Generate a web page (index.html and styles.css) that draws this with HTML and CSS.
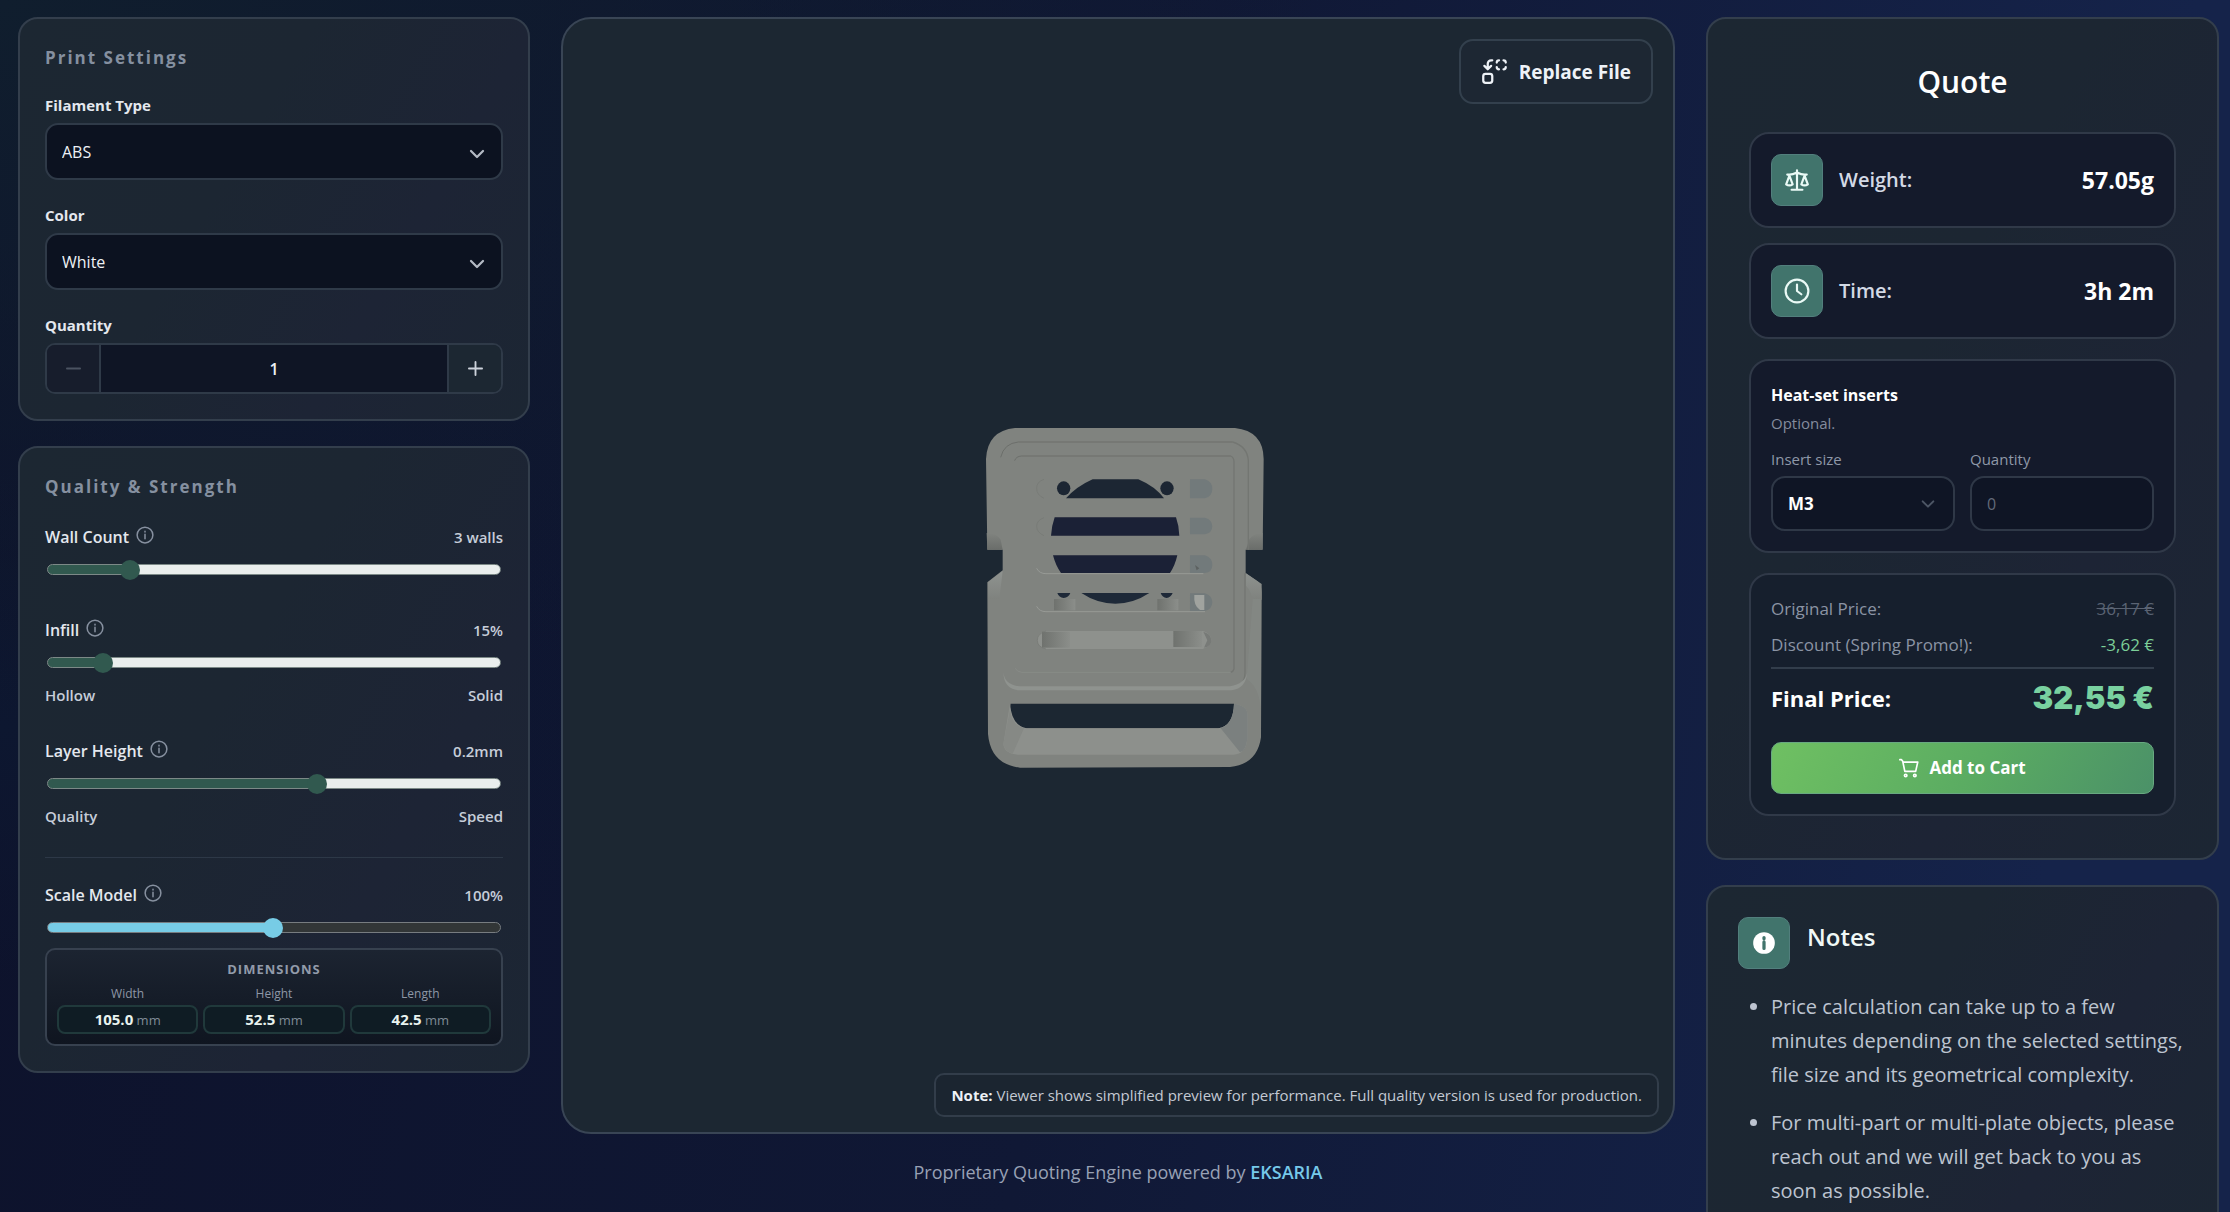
FILE: index.html
```html
<!DOCTYPE html>
<html lang="en">
<head>
<meta charset="utf-8">
<meta name="viewport" content="width=device-width, initial-scale=1">
<title>Instant Quote</title>
<link rel="stylesheet" href="styles.css">
</head>
<body>
<svg class="sprite" aria-hidden="true">
  <symbol id="i-info" viewBox="0 0 24 24"><circle cx="12" cy="12" r="10.5"/><path d="M12 11v6M12 7v1"/></symbol>
  <symbol id="i-chevron" viewBox="0 0 24 24"><path d="m4 8 8 8 8-8"/></symbol>
</svg>
<div class="app">
  <aside class="column">
    <section class="card settings">
      <h2 class="section-title">Print Settings</h2>
      <div class="field">
        <label class="label" for="filament">Filament Type</label>
        <div class="select">
          <select id="filament"><option>ABS</option></select>
          <svg class="chevron"><use href="#i-chevron"/></svg>
        </div>
      </div>
      <div class="field">
        <label class="label" for="color">Color</label>
        <div class="select">
          <select id="color"><option>White</option></select>
          <svg class="chevron"><use href="#i-chevron"/></svg>
        </div>
      </div>
      <div class="field">
        <label class="label" for="qty">Quantity</label>
        <div class="stepper">
          <button type="button" aria-label="Decrease" disabled><svg viewBox="0 0 16 16"><path d="M1 8h14"/></svg></button>
          <input id="qty" type="text" inputmode="numeric" value="1">
          <button type="button" aria-label="Increase"><svg viewBox="0 0 16 16"><path d="M1 8h14M8 1v14"/></svg></button>
        </div>
      </div>
    </section>

    <section class="card settings">
      <h2 class="section-title">Quality &amp; Strength</h2>
      <div class="slider slider-first">
        <div class="row"><label class="label" for="walls">Wall Count</label><svg class="info"><use href="#i-info"/></svg><output class="value" for="walls">3 walls</output></div>
        <input id="walls" class="range" type="range" min="1" max="13" value="3" style="--fill:16.7%">
      </div>
      <div class="slider slider-second">
        <div class="row"><label class="label" for="infill">Infill</label><svg class="info"><use href="#i-info"/></svg><output class="value" for="infill">15%</output></div>
        <input id="infill" class="range" type="range" min="5" max="100" value="15" style="--fill:10.5%">
        <div class="row ends"><span>Hollow</span><span>Solid</span></div>
      </div>
      <div class="slider slider-third">
        <div class="row"><label class="label" for="layer">Layer Height</label><svg class="info"><use href="#i-info"/></svg><output class="value" for="layer">0.2mm</output></div>
        <input id="layer" class="range" type="range" min="0.08" max="0.28" step="0.04" value="0.2" style="--fill:60%">
        <div class="row ends"><span>Quality</span><span>Speed</span></div>
      </div>
      <div class="scale">
        <div class="row"><label class="label" for="scale">Scale Model</label><svg class="info"><use href="#i-info"/></svg><output class="value" for="scale">100%</output></div>
        <input id="scale" class="range range-sky" type="range" min="1" max="200" value="100" style="--fill:49.7%">
        <div class="dimensions">
          <h3>DIMENSIONS</h3>
          <dl>
            <div><dt>Width</dt><dd><b>105.0</b> mm</dd></div>
            <div><dt>Height</dt><dd><b>52.5</b> mm</dd></div>
            <div><dt>Length</dt><dd><b>42.5</b> mm</dd></div>
          </dl>
        </div>
      </div>
    </section>
  </aside>

  <main class="center">
    <section class="viewer" aria-label="Model preview">
      <svg class="model" viewBox="0 0 1110 1113" role="img" aria-label="3D model">
        <defs>
          <linearGradient id="lip" x1="0" y1="0" x2="0" y2="1"><stop offset="0" stop-color="#80837f"/><stop offset="1" stop-color="#6a6d6a"/></linearGradient>
          <linearGradient id="peg" x1="0" y1="0" x2="1" y2="0"><stop offset="0" stop-color="#6f726e"/><stop offset="1" stop-color="#8b8e8a"/></linearGradient>
          <linearGradient id="shoulder" x1="0" y1="0" x2="0" y2="1"><stop offset="0" stop-color="#8f9390"/><stop offset="1" stop-color="#7f827e"/></linearGradient>
        </defs>
        <g transform="translate(397 390) scale(.33333)">
          <path fill="#80837f" fill-rule="evenodd" d="M165 57H825Q910 66 911 150L908 422H857V493L886 512Q905 522 905 550L903 985Q892 1066 810 1074L180 1076Q92 1066 84 975L82 520L128 484V422H82L78 150Q82 65 165 57ZM152 884H822V900Q820 950 775 958H200Q155 950 150 895Z"/>
          <path fill="url(#lip)" d="M80 372Q112 374 122 392L128 422H82ZM908 372Q880 374 868 390L858 422H907Z"/>
          <path fill="url(#shoulder)" d="M128 486 84 520V570H118ZM858 493 905 525V572H878Q873 545 858 530Z"/>
          <path fill="#868b88" d="M878 570H904L903 900Q895 830 860 810Z" opacity=".5"/>
          <path fill="none" stroke="#6b6e6a" stroke-width="3" d="M122 145Q132 103 175 99H818M164 155Q168 142 185 141H812"/>
          <path fill="none" stroke="#737672" stroke-width="4" d="M818 99Q862 112 865 155V422M855 493V790Q855 815 843 825M812 141Q822 146 822 158V780Q820 788 812 790"/>
          <path fill="none" stroke="#8b8f8b" stroke-width="2" d="M812 790H185Q170 788 166 778"/>
          <path fill="#8f938f" d="M130 790Q134 828 178 832H810Q855 825 862 790 858 838 815 844H178Q132 842 130 790Z"/>
          <path fill="#8d908c" d="M150 884Q155 950 200 958H775Q820 950 822 884 862 890 862 915V990Q858 1035 820 1037H175Q133 1035 130 1005Z"/>
          <path fill="#7b807f" d="M822 884Q862 890 862 915V990Q858 1025 840 1030L782 958Q820 945 822 884Z"/>
          <path fill="#868985" d="M130 1005 150 900Q155 950 192 958L158 1034Q134 1028 130 1005Z"/>
          <g fill="#1c2633">
            <ellipse cx="311" cy="238" rx="20" ry="21"/><ellipse cx="621" cy="238" rx="20" ry="21"/>
            <path d="M398 211H535Q585 232 612 268H318Q350 232 398 211Z"/>
          </g>
          <g fill="#1b2136">
            <path d="M284 325H648Q657 350 658 380H273Q275 350 284 325ZM279 439H652Q645 470 630 492H303Q287 470 279 439Z"/>
          </g>
          <path fill="#1e2938" d="M364 552H568Q520 584 466 584T364 552ZM292 552H331Q326 566 311 567 297 566 292 552ZM602 552H638Q632 566 620 567 607 566 602 552Z"/>
          <g fill="#727a7b">
            <path d="M690 211H735Q757 218 757 240T735 268H690ZM690 326H735Q757 332 757 352T735 376H690ZM690 439H735Q757 446 757 468T735 492H690ZM690 553H735Q757 560 757 580T735 606H690Z"/>
          </g>
          <path fill="#a0a39f" d="M703 558H733V603H720Q700 590 703 558Z"/>
          <path fill="#5d6261" d="m705 468 13 10-8 6Z"/>
          <path fill="url(#peg)" d="M282 570H346V604H282Z"/>
          <path fill="url(#peg)" d="M592 570H655V604H592Z"/>
          <path fill="#8e918d" d="M255 666H730Q754 675 754 693T728 720H258Q232 714 232 694T255 666Z"/>
          <path fill="url(#peg)" d="M246 668H330V716H246Z"/>
          <path fill="url(#peg)" d="M640 666H726V714H640Z"/>
          <path fill="#777a77" d="M730 668Q754 675 754 694T732 716L742 694Z"/>
          <path fill="none" stroke="#979a96" stroke-width="3" d="M230 478Q238 494 258 494H730M230 592Q238 608 258 608H735"/>
          <path fill="none" stroke="#747773" stroke-width="2" d="M252 211Q230 218 230 238T252 268M252 326Q230 334 230 352T252 380M258 666Q232 674 232 694T258 720"/>
        </g>
      </svg>
      <button type="button" class="replace">
        <svg viewBox="0 0 24 24"><path d="M14 4a2 2 0 0 1 2-2M16 10a2 2 0 0 1-2-2M20 2a2 2 0 0 1 2 2M22 8a2 2 0 0 1-2 2M3 7l3 3 3-3M6 10V5a3 3 0 0 1 3-3h1"/><rect x="2" y="14" width="8" height="8" rx="2"/></svg>
        Replace File
      </button>
      <p class="viewer-note"><strong>Note:</strong> Viewer shows simplified preview for performance. Full quality version is used for production.</p>
    </section>
    <p class="powered">Proprietary Quoting Engine powered by <a href="#">EKSARIA</a></p>
  </main>

  <aside class="column">
    <section class="card quote">
      <h2 class="quote-title">Quote</h2>
      <div class="panel stat">
        <span class="tile"><svg viewBox="0 0 24 24"><path d="m16 16 3-8 3 8c-.87.65-1.92 1-3 1s-2.13-.35-3-1ZM2 16l3-8 3 8c-.87.65-1.92 1-3 1s-2.13-.35-3-1ZM7 21h10M12 3v18M3 7h2c2 0 5-1 7-2 2 1 5 2 7 2h2"/></svg></span>
        <span class="stat-name">Weight:</span>
        <span class="stat-value">57.05g</span>
      </div>
      <div class="panel stat">
        <span class="tile"><svg viewBox="0 0 24 24"><circle cx="12" cy="12" r="10.500"/><path d="M12 6v6l4 3"/></svg></span>
        <span class="stat-name">Time:</span>
        <span class="stat-value">3h 2m</span>
      </div>
      <div class="panel inserts">
        <h3>Heat-set inserts</h3>
        <p class="optional">Optional.</p>
        <div class="insert-fields">
          <div>
            <label for="insert-size">Insert size</label>
            <div class="select select-small">
              <select id="insert-size"><option>M3</option></select>
              <svg class="chevron"><use href="#i-chevron"/></svg>
            </div>
          </div>
          <div>
            <label for="insert-qty">Quantity</label>
            <input id="insert-qty" class="insert-qty" type="text" inputmode="numeric" placeholder="0">
          </div>
        </div>
      </div>
      <div class="panel price">
        <div class="row price-row"><span>Original Price:</span><s>36,17 €</s></div>
        <div class="row price-row"><span>Discount (Spring Promo!):</span><span class="discount">-3,62 €</span></div>
        <div class="row final"><span>Final Price:</span><strong>32,55 €</strong></div>
        <button type="button" class="cart">
          <svg viewBox="0 0 24 24"><path d="M1 2h2l1.500 2L7 16h13l2.500-11H5"/><circle cx="8" cy="21" r="1.500"/><circle cx="19" cy="21" r="1.500"/></svg>
          Add to Cart
        </button>
      </div>
    </section>

    <section class="card notes">
      <header>
        <span class="tile"><svg class="solid" viewBox="0 0 24 24"><circle cx="12" cy="12" r="10"/><path d="M12 11v6M12 7v1"/></svg></span>
        <h2>Notes</h2>
      </header>
      <ul>
        <li>Price calculation can take up to a few minutes depending on the selected settings, file size and its geometrical complexity.</li>
        <li>For multi-part or multi-plate objects, please reach out and we will get back to you as soon as possible.</li>
      </ul>
    </section>
  </aside>
</div>
</body>
</html>
```
FILE: styles.css
```css
* { box-sizing: border-box; }

body {
  margin: 0;
  color: #d5dae3;
  font-family: "Open Sans", "Noto Sans", sans-serif;
  font-size: 16px;
  line-height: 24px;
  background:
    radial-gradient(ellipse at 0 0, #101e2e 0, transparent 42%),
    radial-gradient(ellipse at 0 60%, #0d1730 0, transparent 25%),
    linear-gradient(100deg, #0d122b 0, #101835 50%, #15234a 90%);
}

h2, h3, p, ul, dl, dd { margin: 0; }
button, input, select { font: inherit; color: inherit; }
svg { fill: none; stroke: currentColor; stroke-width: 2; stroke-linecap: round; stroke-linejoin: round; }
.sprite { display: none; }

.app {
  display: grid;
  grid-template-columns: 512px minmax(0, 1fr) 513px;
  align-items: start;
  gap: 31px;
  height: 100vh;
  padding: 17px 11px 17px 18px;
  overflow: auto;
  scrollbar-width: none;
}

.column { display: flex; flex-direction: column; gap: 25px; }

.card {
  border: 2px solid #333e4c;
  border-radius: 20px;
  background: linear-gradient(120deg, #1c2732 0, #1c2632 40%, #1d2435 70%, #1c2633 100%);
}

.settings { padding: 27px 25px 25px; }

.section-title {
  margin-bottom: 23px;
  color: #8590a0;
  font-size: 17px;
  font-weight: 700;
  letter-spacing: 2px;
}

.field + .field { margin-top: 23px; }
.label { color: #e4e8ee; font-size: 16px; font-weight: 600; }
.field .label { display: block; margin-bottom: 6px; font-size: 15px; font-weight: 700; }

.select { display: grid; align-items: center; }
.select > * { grid-area: 1 / 1; }
.select select {
  width: 100%;
  height: 57px;
  padding: 0 15px;
  border: 2px solid #2f3a48;
  border-radius: 13px;
  background: #0c1220;
  color: #eef1f5;
  appearance: none;
}
.chevron {
  justify-self: end;
  width: 18px;
  height: 18px;
  margin: 4px 17px 0 0;
  color: #b4bac4;
  stroke-width: 3;
  pointer-events: none;
}

.stepper {
  display: grid;
  grid-template-columns: 52px 1fr 52px;
  height: 51px;
  overflow: hidden;
  border: 2px solid #2f3a48;
  border-radius: 10px;
}
.stepper button { display: grid; place-items: center; padding: 0; border: 0; background: #1c2732; color: #ccd2db; }
.stepper button:disabled { background: #171d2c; color: #4b5361; }
.stepper svg { width: 15px; height: 15px; }
.stepper input {
  min-width: 0;
  padding: 0;
  border: solid #2f3a48;
  border-width: 0 2px;
  background: #0f1525;
  color: #eef1f5;
  font-weight: 600;
  text-align: center;
}

.row { display: flex; align-items: center; }
.row > :last-child { margin-left: auto; }
.info { width: 18px; height: 18px; margin: -4px 0 0 7px; color: #8791a0; }
.value, .ends { color: #c6cdd9; font-size: 15px; font-weight: 600; }
.ends { margin-top: 11px; }
.slider-first { margin-top: 26px; }
.slider-second { margin-top: 39px; }
.slider-third { margin-top: 32px; }

.range {
  display: block;
  width: calc(100% - 4px);
  height: 20px;
  margin: 10px 2px 0;
  background: none;
  appearance: none;
  --on: #31594f;
  --off: #eaeeed;
  --line: #7c8987;
}
.range-sky { --on: #77cce6; --off: #323637; --line: #777c80; }
.range::-webkit-slider-runnable-track {
  height: 11px;
  border: 1px solid var(--line);
  border-radius: 6px;
  background: linear-gradient(90deg, var(--on) var(--fill), var(--off) var(--fill));
}
.range::-webkit-slider-thumb {
  width: 20px;
  height: 20px;
  margin-top: -5px;
  border-radius: 50%;
  background: var(--on);
  appearance: none;
}

.scale { margin-top: 29px; padding-top: 25px; border-top: 1px solid #2d3847; }

.dimensions {
  margin-top: 11px;
  padding: 9px 10px 10px;
  border: 2px solid #37414f;
  border-radius: 10px;
  background: linear-gradient(#1c2431, #0f1520);
  text-align: center;
}
.dimensions h3 { color: #929baa; font-size: 13px; font-weight: 700; line-height: 20px; letter-spacing: 1px; }
.dimensions dl { display: grid; grid-template-columns: repeat(3, 1fr); gap: 5px; margin-top: 6px; }
.dimensions dt { color: #8e97a6; font-size: 12px; line-height: 18px; }
.dimensions dd { margin-top: 2px; border: 2px solid #20393b; border-radius: 8px; background: #0f1c24; color: #7f8b96; font-size: 13px; line-height: 24px; }
.dimensions b { color: #e9f3ef; font-size: 15px; }

.viewer {
  position: relative;
  aspect-ratio: 1114 / 1117;
  border: 2px solid #394555;
  border-radius: 30px;
  background: #1c2732;
}
.model { display: block; width: 100%; height: 100%; stroke: none; stroke-linecap: butt; }
.replace {
  position: absolute;
  top: 20px;
  right: 20px;
  display: flex;
  align-items: center;
  gap: 11px;
  height: 65px;
  padding: 0 20px;
  border: 2px solid #33404d;
  border-radius: 14px;
  background: #1d2733;
  color: #eef2f7;
  font-size: 19px;
  font-weight: 700;
}
.replace svg { width: 27px; height: 27px; }
.viewer-note {
  position: absolute;
  right: 14px;
  bottom: 15px;
  padding: 8px 15px;
  border: 2px solid #323d4a;
  border-radius: 10px;
  background: #1b2530;
  color: #c3c9d3;
  font-size: 15px;
}
.viewer-note strong { color: #eef2f7; }
.powered { margin-top: 26px; color: #98a1b5; font-size: 18px; text-align: center; }
.powered a { color: #76c9ea; font-weight: 600; text-decoration: none; }

.quote { padding: 42px 41px; }
.quote-title { margin-bottom: 29px; color: #fff; font-size: 30px; font-weight: 600; line-height: 42px; text-align: center; }
.panel { border: 2px solid #303948; border-radius: 20px; background: #141a2b; }
.stat { display: flex; align-items: center; height: 96px; margin-bottom: 15px; padding: 0 20px; }
.tile {
  display: grid;
  place-items: center;
  width: 52px;
  height: 52px;
  border: 1px solid #527f7d;
  border-radius: 10px;
  background: #41746c;
  color: #eafaf6;
}
.tile svg { width: 26px; height: 26px; }
.tile .solid { fill: #fff; stroke: none; }
.tile .solid path { stroke: #41746c; stroke-width: 3; }
.stat-name { margin-left: 16px; color: #d3d9e5; font-size: 20px; font-weight: 600; }
.stat-value { margin-left: auto; color: #fff; font-size: 23px; font-weight: 700; }

.inserts { margin-top: 20px; padding: 22px 20px 20px; }
.inserts h3 { color: #fff; font-size: 16px; font-weight: 700; line-height: 24px; }
.optional { margin-top: 4px; color: #848c9d; font-size: 15px; }
.insert-fields { display: grid; grid-template-columns: 1fr 1fr; gap: 15px; margin-top: 12px; }
.insert-fields label { display: block; margin-bottom: 5px; color: #8f98a8; font-size: 15px; font-weight: 500; }
.select-small select, .insert-qty {
  width: 100%;
  height: 55px;
  padding: 0 15px;
  border: 2px solid #2f3847;
  border-radius: 14px;
  background: #0f1525;
}
.select-small select { color: #fff; font-size: 17px; font-weight: 700; }
.select-small .chevron { width: 16px; height: 16px; margin: 0 19px 0 0; color: #4d5665; }
.insert-qty::placeholder { color: #626a79; opacity: 1; }

.price { margin-top: 20px; padding: 22px 20px 20px; background: #161f2d; }
.price-row { height: 24px; margin-bottom: 12px; color: #8b94a4; font-size: 17px; }
.price-row s { color: #5a6373; }
.discount { color: #7ccf98; }
.final { height: 60px; margin-top: -2px; border-top: 2px solid #323d4b; color: #fff; font-size: 22px; font-weight: 700; }
.final strong { color: #79d1a0; font-family: Inter, "Liberation Sans", sans-serif; font-size: 31px; }
.cart {
  display: flex;
  align-items: center;
  justify-content: center;
  gap: 10px;
  width: 100%;
  height: 52px;
  margin-top: 15px;
  border: 1px solid #68a981;
  border-radius: 10px;
  background: linear-gradient(120deg, #6fc062, #5aab62 55%, #4b9168);
  color: #fff;
  font-size: 17px;
  font-weight: 700;
}
.cart svg { width: 20px; height: 20px; }

.notes { padding: 30px 30px 20px; }
.notes header { display: flex; gap: 17px; }
.notes h2 { color: #f0f8f6; font-size: 24px; font-weight: 600; line-height: 40px; }
.notes ul { margin-top: 21px; padding-left: 33px; color: #bdc4d0; font-size: 20px; line-height: 34px; }
.notes li + li { margin-top: 14px; }
```
